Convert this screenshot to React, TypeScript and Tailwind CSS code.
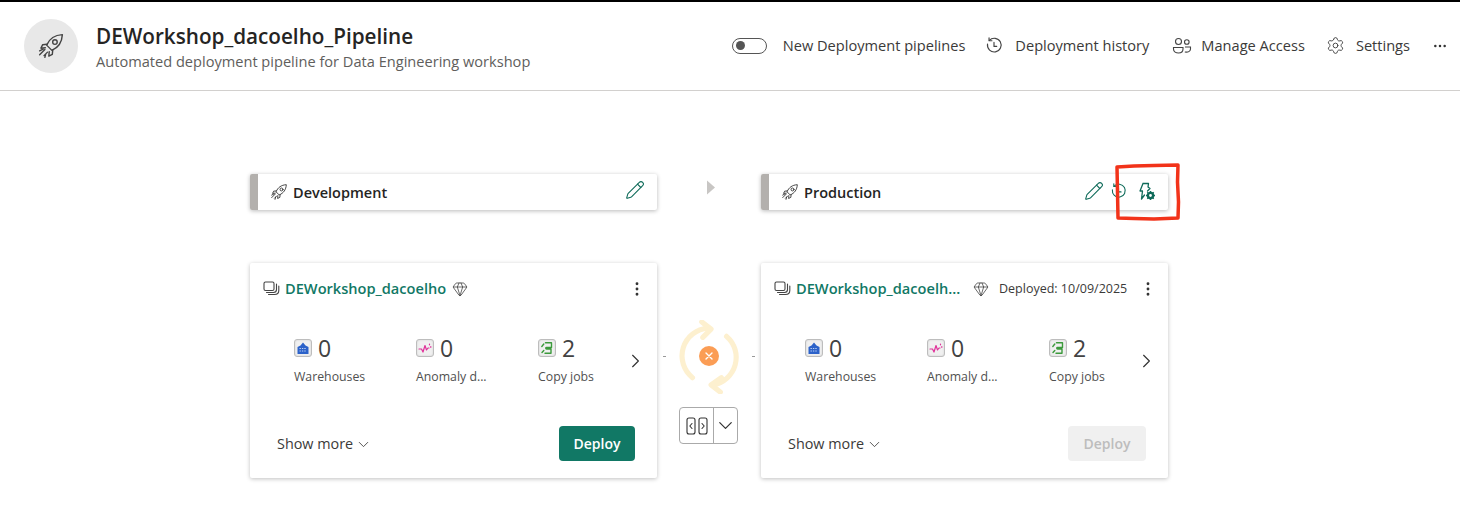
import React from "react";
import { MoreHorizontal, MoreVertical, ChevronRight, ChevronDown, Pencil, Settings, Gem } from "lucide-react";

const F = { fontFamily: '"Open Sans", "Noto Sans", sans-serif' };

function Rocket({ size = 20, className = "" }: { size?: number; className?: string }) {
  return (
    <svg width={size} height={size} viewBox="0 0 32 32" fill="none" stroke="currentColor" strokeWidth="1.600" strokeLinecap="round" strokeLinejoin="round" className={className}>
      <path d="M11 15 C14 8 20 3.500 29 3 C28.500 12 24 18 17 21 Z" />
      <circle cx="20.500" cy="11.500" r="2.600" />
      <path d="M11.500 14 L6.500 14.500 L4.500 18.500 L9.500 18" />
      <path d="M18 20.500 L17.500 25.500 L13.500 27.500 L14 22.500" />
      <path d="M9 20 L3 26 M12 23 L8 27 M7 19.500 L3 21.500 M10 25 L9 29" />
    </svg>
  );
}

function History({ size = 18, className = "" }: { size?: number; className?: string }) {
  return (
    <svg width={size} height={size} viewBox="0 0 20 20" fill="none" stroke="currentColor" strokeWidth="1.300" strokeLinecap="round" strokeLinejoin="round" className={className}>
      <path d="M4.800 3.800 A7.600 7.600 0 1 1 2.800 8" />
      <path d="M4.500 1 V4.200 H7.700" />
      <path d="M10 6 V10.500 H13" />
    </svg>
  );
}

function People({ className = "" }: { className?: string }) {
  return (
    <svg width="20" height="20" viewBox="0 0 20 20" fill="none" stroke="currentColor" strokeWidth="1.100" className={className}>
      <circle cx="6.500" cy="5.500" r="3" />
      <circle cx="14.800" cy="6" r="2.300" />
      <path d="M1.500 11.500 H11 V13 C11 16 9 17 6.500 17 C4 17 1.500 16 1.500 13 Z" />
      <path d="M13 11 H18.500 V13 C18.500 15.500 16 16.500 12.800 16" />
    </svg>
  );
}

function StackIcon() {
  return (
    <svg width="17" height="17" viewBox="0 0 17 17" fill="none" stroke="#444" strokeWidth="1.100" strokeLinecap="round">
      <rect x="1" y="2" width="10" height="8.500" rx="1.500" />
      <path d="M3.500 12.500 H10.500 C12.500 12.500 13.500 11.500 13.500 9.500 V4" />
      <path d="M5.500 14.500 H11.500 C14 14.500 15.800 13 15.800 10.500 V6" />
    </svg>
  );
}

function DeployRules() {
  return (
    <svg width="19" height="19" viewBox="0 0 19 19" fill="none" className="text-[#0f6b5a]">
      <path d="M5 1.500 H10.500 L10 5 L12 6.500 L9.500 9 M5 1.500 L2 9 H4.500 L3.500 17 L6.500 13" stroke="currentColor" strokeWidth="1.300" strokeLinejoin="round" strokeLinecap="round" />
      <circle cx="12.500" cy="13.500" r="2.600" fill="none" stroke="currentColor" strokeWidth="2.400" />
      <path d="M12.500 9 V10.500 M12.500 16.500 V18 M8 13.500 H9.500 M15.500 13.500 H17 M9.300 10.300 L10.300 11.300 M14.700 15.700 L15.700 16.700 M15.700 10.300 L14.700 11.300 M10.300 15.700 L9.300 16.700" stroke="currentColor" strokeWidth="1.500" />
    </svg>
  );
}

function TileIcon({ kind }: { kind: "wh" | "an" | "cp" }) {
  return (
    <span className="w-[18px] h-[18px] rounded-[3px] border border-[#bdbdbd] bg-[#f0f0f0] flex items-center justify-center shadow-[inset_0_0_2px_#ccc]">
      {kind === "wh" && (
        <svg width="14" height="14" viewBox="0 0 14 14">
          <path d="M1.500 13 V6 L4.500 4.500 L7 1.500 L9.500 4.500 L12.500 6 V13 Z" fill="#2c62c9" />
          <path d="M3.500 7.500 H10.500 M3.500 10 H10.500" stroke="#bcd0f5" strokeWidth="1" strokeDasharray="1.400 1" />
        </svg>
      )}
      {kind === "an" && (
        <svg width="14" height="14" viewBox="0 0 14 14" fill="none" stroke="#e0309a" strokeWidth="1.200" strokeLinejoin="round" strokeLinecap="round">
          <path d="M1 8 H3.500 L5 11 L7 4.500 L8.500 9 L10 7 H11" />
          <path d="M11.500 3 V3.800 M12.800 5.500 V6.300" />
        </svg>
      )}
      {kind === "cp" && (
        <svg width="14" height="14" viewBox="0 0 14 14" fill="none" stroke="#3c9a3c" strokeWidth="1.400" strokeLinecap="round" strokeLinejoin="round">
          <path d="M5.500 1.800 H11.500 V6.500 H6.500 C5.500 6.500 5.500 8 6.500 8 H11 V12.200 H5" />
          <path d="M1.800 5.500 L3.800 3 M2 11.500 L3.800 9.500" />
        </svg>
      )}
    </span>
  );
}

function Metric({ kind, n, label, w }: { kind: "wh" | "an" | "cp"; n: number; label: string; w: string }) {
  return (
    <div className={`${w} shrink-0`}>
      <div className="flex items-center gap-[6px] h-[24px]">
        <TileIcon kind={kind} />
        <span className="text-[23px] leading-[24px] text-[#424242]">{n}</span>
      </div>
      <div className="text-[12.3px] leading-[16px] mt-[9px] text-[#505050]">{label}</div>
    </div>
  );
}

function StageHeader({ name, prod }: { name: string; prod?: boolean }) {
  return (
    <div className="h-[36px] flex rounded-[2px] bg-white shadow-[0_1px_4px_rgba(0,0,0,0.28)] overflow-hidden">
      <div className="w-[8px] bg-[#b3b0ad]" />
      <div className="flex-1 flex items-center pl-[12px]">
        <Rocket size={18} className="text-[#333]" />
        <span className="ml-[5px] pt-[1px] text-[14.5px] font-semibold text-[#252423]">{name}</span>
      </div>
      {prod ? (
        <div className="flex items-center pr-[11px] pb-[2px] text-[#0f6b5a]">
          <Pencil size={20} strokeWidth={1.300} />
          <History size={17} className="ml-[6px]" />
          <span className="ml-[11px]"><DeployRules /></span>
        </div>
      ) : (
        <div className="flex items-center pr-[12px] pb-[4px] text-[#0f6b5a]">
          <Pencil size={20} strokeWidth={1.300} />
        </div>
      )}
    </div>
  );
}

function Card({ title, deployed, active }: { title: string; deployed?: string; active?: boolean }) {
  return (
    <div className="h-[215px] rounded-[2px] bg-white shadow-[0_1px_4px_rgba(0,0,0,0.25)] flex flex-col">
      <div className="flex items-center h-[17px] mt-[17px] ml-[13px] mr-[11px]">
        <StackIcon />
        <span className={`ml-[5px] text-[14.6px] font-semibold text-[#117865] whitespace-nowrap ${deployed ? "w-[169px]" : ""}`}>{title}</span>
        <Gem size={16} strokeWidth={1.100} className={`text-[#333] ${deployed ? "ml-[8px]" : "ml-[6px]"}`} />
        {deployed && <span className="ml-[10px] pt-[1px] text-[12.5px] text-[#3b3a39] whitespace-nowrap">{deployed}</span>}
        <MoreVertical size={18} strokeWidth={1.800} className="ml-auto text-[#333]" />
      </div>
      <div className="flex items-center mt-[39px] pl-[44px] pr-[10px]">
        <Metric kind="wh" n={0} label="Warehouses" w="w-[122px]" />
        <Metric kind="an" n={0} label="Anomaly d..." w="w-[122px]" />
        <Metric kind="cp" n={2} label="Copy jobs" w="w-[86px]" />
        <ChevronRight size={24} strokeWidth={1.200} className="text-[#333] ml-auto" />
      </div>
      <div className="flex items-center justify-between mt-auto mb-[17px] pl-[27px] pr-[22px]">
        <div className="flex items-center gap-[2px] text-[14.4px] text-[#3b3a39]">
          Show more <ChevronDown size={17} strokeWidth={1.200} className="mt-[2px]" />
        </div>
        <button className={`h-[35px] rounded-[4px] text-[14px] font-semibold ${active ? "w-[76px] bg-[#117865] text-white" : "w-[78px] bg-[#f0f0f0] text-[#bdbdbd]"}`}>
          Deploy
        </button>
      </div>
    </div>
  );
}

function SyncStatus() {
  return (
    <div className="relative h-[75px] w-[104px] flex items-center justify-between px-[6px]">
      <span className="w-[3px] h-px bg-[#999]" />
      <svg width="64" height="74" viewBox="-2 0 62 70" fill="none" stroke="#fdf0cf" strokeWidth="5" strokeLinecap="round" strokeLinejoin="round">
        <path d="M28 7 A27 27 0 0 0 13 55" />
        <path d="M22 1 L31 8 L23 16" />
        <path d="M46 15 A27 27 0 0 1 33 62" />
        <path d="M41 55 L31 62 L40 69" />
      </svg>
      <span className="w-[3px] h-px bg-[#999]" />
      <span className="absolute left-[42px] top-[27px] w-[20px] h-[20px] rounded-full bg-[#fb9d55] flex items-center justify-center">
        <svg width="10" height="10" viewBox="0 0 10 10" stroke="#fff" strokeWidth="1.400" strokeLinecap="round"><path d="M2 2 L8 8 M8 2 L2 8" /></svg>
      </span>
    </div>
  );
}

function CompareButton() {
  return (
    <div className="mt-[13px] ml-[22px] w-[59px] h-[37px] rounded-[4px] border border-[#aaa] bg-white flex">
      <div className="w-[35px] border-r border-[#aaa] flex items-center justify-center">
        <svg width="22" height="18" viewBox="0 0 22 18" fill="none" stroke="#333" strokeWidth="1.100" strokeLinecap="round" strokeLinejoin="round">
          <rect x="1" y="1" width="8" height="16" rx="2" />
          <rect x="13" y="1" width="8" height="16" rx="2" />
          <path d="M6 6.500 L3.800 9 L6 11.500 M16 6.500 L18.200 9 L16 11.500" />
        </svg>
      </div>
      <div className="flex-1 flex items-center justify-center">
        <ChevronDown size={23} strokeWidth={1.300} className="text-[#333]" />
      </div>
    </div>
  );
}

export default function App() {
  return (
    <div style={F} className="relative h-[532px] w-[1460px] bg-white overflow-hidden">
      <div className="h-[2px] bg-black" />
      <header className="h-[89px] border-b border-[#d2d0ce] flex items-center pl-[24px] pr-[12px]">
        <div className="w-[54px] h-[54px] rounded-full bg-[#e8e8e8] flex items-center justify-center text-[#444]">
          <Rocket size={28} />
        </div>
        <div className="ml-[18px] pt-[1px]">
          <div className="text-[20.7px] leading-[28px] font-semibold text-[#252423]">DEWorkshop_dacoelho_Pipeline</div>
          <div className="text-[14.6px] leading-[22px] text-[#605e5c]">Automated deployment pipeline for Data Engineering workshop</div>
        </div>
        <div className="ml-auto flex items-center text-[14.6px] text-[#3b3a39]">
          <span className="w-[35px] h-[16px] rounded-full border border-[#555] flex items-center pl-[3px]">
            <span className="w-[9px] h-[9px] rounded-full bg-[#555]" />
          </span>
          <span className="ml-[16px]">New Deployment pipelines</span>
          <History size={18} className="ml-[20px] text-[#444]" />
          <span className="ml-[12px]">Deployment history</span>
          <People className="ml-[23px] text-[#444]" />
          <span className="ml-[9px]">Manage Access</span>
          <Settings size={19} strokeWidth={1.200} className="ml-[21px] text-[#444]" />
          <span className="ml-[11px]">Settings</span>
          <MoreHorizontal size={16} strokeWidth={1.800} className="ml-[22px] text-[#333]" />
        </div>
      </header>
      <main className="pl-[250px] pt-[83px]">
        <div className="grid grid-cols-[407px_104px_407px] grid-rows-[36px_215px] gap-y-[53px]">
          <StageHeader name="Development" />
          <div className="flex justify-center pt-[6px] pl-[4px]">
            <svg width="10" height="15" viewBox="0 0 10 14"><path d="M1 0 L9 7 L1 14 Z" fill="#c8c6c4" /></svg>
          </div>
          <StageHeader name="Production" prod />
          <Card title="DEWorkshop_dacoelho" active />
          <div className="pt-[56px]">
            <SyncStatus />
            <CompareButton />
          </div>
          <Card title="DEWorkshop_dacoelh..." deployed="Deployed: 10/09/2025" />
        </div>
      </main>
      <svg className="absolute left-[1114px] top-[162px]" width="68" height="60" viewBox="0 0 68 60" fill="none" stroke="#f2331a" strokeWidth="3.500" strokeLinejoin="round">
        <path d="M3 5 L20 4 L40 3.500 L64 3 L63.500 20 L64.500 40 L64 56 L40 57 L20 56.500 L4 56 L3.500 30 Z" />
      </svg>
    </div>
  );
}
